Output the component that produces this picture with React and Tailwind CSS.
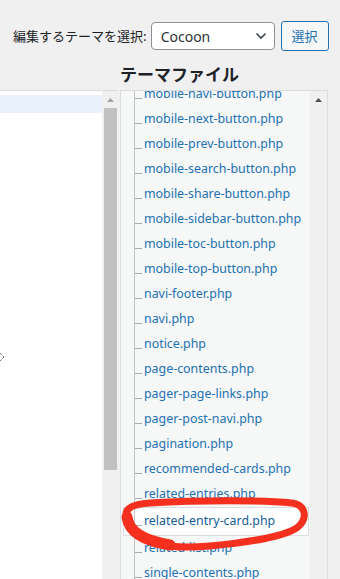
const files = [
  "mobile-navi-button.php",
  "mobile-next-button.php",
  "mobile-prev-button.php",
  "mobile-search-button.php",
  "mobile-share-button.php",
  "mobile-sidebar-button.php",
  "mobile-toc-button.php",
  "mobile-top-button.php",
  "navi-footer.php",
  "navi.php",
  "notice.php",
  "page-contents.php",
  "pager-page-links.php",
  "pager-post-navi.php",
  "pagination.php",
  "recommended-cards.php",
  "related-entries.php",
  "related-entry-card.php",
  "related-list.php",
  "single-contents.php",
  "single-footer.php",
];

const CURRENT = "related-entry-card.php";

function Row({ name }) {
  return (
    <div className="flex h-[25px] items-stretch">
      <div className="w-[13px] shrink-0" />
      <div className="flex w-[10px] shrink-0 items-center border-l border-[#c3c4c7]">
        <div className="mt-[8px] h-px w-[7px] bg-[#a7aaad]" />
      </div>
      <span className="flex items-center whitespace-nowrap text-[12.4px] text-[#2271b1]">{name}</span>
    </div>
  );
}

function CurrentRow({ name }) {
  return (
    <div className="relative ml-[2px] mr-[1px] flex h-[29px] items-stretch border border-[#dcdcde] bg-white">
      <div className="w-[10px] shrink-0" />
      <div className="flex w-[10px] shrink-0 items-center border-l border-[#c3c4c7]">
        <div className="mt-[8px] h-px w-[7px] bg-[#a7aaad]" />
      </div>
      <span className="flex items-center whitespace-nowrap text-[12.4px] text-[#135e96]">{name}</span>
      <div className="absolute bottom-[-2px] left-[8px] h-[4px] w-[3px] bg-[#72aee6]" />
    </div>
  );
}

export default function App() {
  return (
    <div className="relative h-[579px] w-[340px] overflow-hidden bg-[#f0f0f1] font-['Noto_Sans','Noto_Sans_CJK_JP',sans-serif]">
      {/* header */}
      <div className="mt-[21px] flex h-[30px] items-center pl-[13px]">
        <span className="text-[13px] text-[#1d2327] font-['Noto_Sans_CJK_JP','Noto_Sans',sans-serif]">編集するテーマを選択:</span>
        <div className="ml-[4px] flex h-[28px] w-[124px] items-center justify-between rounded-[4px] border border-[#8c8f94] bg-white pl-[9px] pr-[7px] text-[14px] text-[#2c3338]">
          <span>Cocoon</span>
          <svg width="12" height="8" viewBox="0 0 12 8" fill="none">
            <path d="M1.5 1.5 L6 6 L10.5 1.5" stroke="#3c434a" strokeWidth="1.6" />
          </svg>
        </div>
        <button className="ml-[6px] flex h-[30px] w-[48px] items-center justify-center rounded-[3px] border border-[#2271b1] bg-[#f6f7f7] text-[13px] text-[#2271b1] font-['Noto_Sans_CJK_JP',sans-serif]">
          選択
        </button>
      </div>

      <div className="grid grid-cols-[118px_208px] gap-x-[2px]">
        <div />
        <h2 className="h-[39px] pt-[13px] text-[17px] font-bold leading-[20px] text-[#1d2327] font-['Noto_Sans_CJK_JP',sans-serif]">
          テーマファイル
        </h2>

        {/* left code area */}
        <div className="flex h-[489px] border-t border-[#dcdcde]">
          <div className="relative flex-1 bg-white">
            <div className="mt-[4px] h-[18px] bg-[#e8f1fc]" />
            <svg className="absolute left-0 top-[261px]" width="6" height="10" viewBox="0 0 6 10" fill="none">
              <path d="M0 1 L4 5 L0 9" stroke="#50575e" strokeWidth="1" strokeDasharray="1.2 0.8" />
            </svg>
          </div>
          <div className="flex w-[16px] flex-col bg-[#f0f0f0]">
            <div className="flex h-[17px] items-center justify-center">
              <svg width="7" height="4" viewBox="0 0 7 4">
                <path d="M0 4 L3.5 0 L7 4 Z" fill="#a3a3a3" />
              </svg>
            </div>
            <div className="ml-[2px] h-[362px] w-[13px] bg-[#c1c1c1]" />
          </div>
        </div>

        {/* right file list */}
        <div className="flex h-[489px] border border-b-0 border-[#dcdcde]">
          <div className="flex-1 overflow-hidden bg-[#f6f7f7]">
            <div className="mt-[-9.5px]">
              {files.map((f) => (f === CURRENT ? <CurrentRow key={f} name={f} /> : <Row key={f} name={f} />))}
            </div>
          </div>
          <div className="flex w-[17px] flex-col bg-[#f0f0f0]">
            <div className="flex h-[17px] items-center justify-center">
              <svg width="7" height="4" viewBox="0 0 7 4">
                <path d="M0 4 L3.5 0 L7 4 Z" fill="#505050" />
              </svg>
            </div>
          </div>
        </div>
      </div>

      {/* red hand-drawn annotation */}
      <svg className="pointer-events-none absolute left-0 top-0" width="340" height="579" viewBox="0 0 340 579" fill="none">
        <path
          d="M128 521 C122 510, 130 504, 150 503 C200 500, 260 500, 292 503 C306 505, 308 518, 298 527 C285 537, 250 542, 210 546 C175 549, 150 545, 138 535 C130 529, 127 525, 128 521"
          stroke="#f5301f"
          strokeWidth="7"
          strokeLinecap="round"
          strokeLinejoin="round"
        />
        <path
          d="M127 517 C129 531, 141 540, 170 545"
          stroke="#f5301f"
          strokeWidth="11"
          strokeLinecap="round"
        />
      </svg>
    </div>
  );
}
